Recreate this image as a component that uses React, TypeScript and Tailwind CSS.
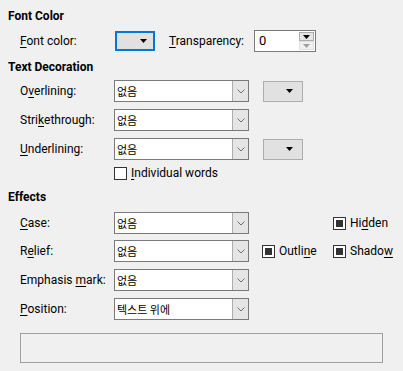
import React from "react";

const U = ({ children }: { children: React.ReactNode }) => (
  <span className="underline underline-offset-[2px] decoration-[1px]">{children}</span>
);

function Chevron() {
  return (
    <svg width="8" height="5" viewBox="0 0 8 5">
      <path d="M0.5 0.5 L4 4 L7.5 0.5" fill="none" stroke="#6d6d6d" strokeWidth="1" />
    </svg>
  );
}

function Tri({ color = "#000" }: { color?: string }) {
  return (
    <svg width="7" height="4" viewBox="0 0 7 4">
      <path d="M0 0 L7 0 L3.5 4 Z" fill={color} />
    </svg>
  );
}

function ListBox({ value }: { value: string }) {
  return (
    <div className="flex h-[22px] w-[135px] border border-[#7a7a7a] bg-white">
      <div className="flex-1 pl-[2px] text-[11px] leading-[20px] font-['Noto_Sans_CJK_KR',sans-serif] text-black">
        {value}
      </div>
      <div className="flex w-[16px] items-center justify-center border-l border-[#adadad] bg-[#e5e5e5]">
        <Chevron />
      </div>
    </div>
  );
}

function ColorBtn({ focused }: { focused?: boolean }) {
  return (
    <div
      className={
        focused
          ? "flex h-[20px] w-[40px] items-center justify-end border-2 border-[#0078d7] bg-[#e1e1e1] pr-[6px]"
          : "flex h-[21px] w-[40px] items-center justify-end border border-[#adadad] bg-[#e1e1e1] pr-[9px]"
      }
    >
      <Tri />
    </div>
  );
}

function Check({ checked, children }: { checked?: boolean; children: React.ReactNode }) {
  return (
    <div className="flex items-center gap-[4px]">
      <div className="flex h-[13px] w-[13px] items-center justify-center border border-[#333] bg-white">
        {checked && <div className="h-[7px] w-[7px] bg-[#333]" />}
      </div>
      <span>{children}</span>
    </div>
  );
}

function Row({ label, children, mt }: { label: React.ReactNode; children: React.ReactNode; mt: string }) {
  return (
    <div className={`flex h-[22px] items-center ${mt}`}>
      <div className="w-[94px] pl-[12px] box-content">{label}</div>
      {children}
    </div>
  );
}

export default function App() {
  return (
    <div className="h-[371px] w-[403px] overflow-hidden bg-[#f0f0f0] pl-[8px] pt-[8px] text-[12px] leading-[16px] text-black font-['Roboto',sans-serif]">
      <div className="h-[16px] font-bold">Font Color</div>
      <div className="mt-[6px] flex h-[22px] items-center">
        <div className="w-[94px] pl-[12px] box-content">
          <U>F</U>ont color:
        </div>
        <div className="ml-[1px]">
          <ColorBtn focused />
        </div>
        <div className="ml-[14px] w-[85px]">
          <U>T</U>ransparency:
        </div>
        <div className="flex h-[22px] w-[62px] items-center border border-[#7a7a7a] bg-white">
          <div className="flex-1 pl-[4px] text-[13px]">0</div>
          <div className="mr-[1px] flex flex-col">
            <div className="flex h-[9px] w-[15px] items-center justify-center border border-[#adadad] bg-[#e5e5e5]">
              <Tri />
            </div>
            <div className="flex h-[9px] w-[15px] items-center justify-center border border-[#e0e0e0] bg-[#f0f0f0]">
              <Tri color="#a0a0a0" />
            </div>
          </div>
        </div>
      </div>

      <div className="mt-[7px] h-[16px] font-bold">Text Decoration</div>
      <Row mt="mt-[5px]" label={<>O<U>v</U>erlining:</>}>
        <ListBox value="없음" />
        <div className="ml-[14px]">
          <ColorBtn />
        </div>
      </Row>
      <Row mt="mt-[7px]" label={<>Stri<U>k</U>ethrough:</>}>
        <ListBox value="없음" />
      </Row>
      <Row mt="mt-[7px]" label={<><U>U</U>nderlining:</>}>
        <ListBox value="없음" />
        <div className="ml-[14px]">
          <ColorBtn />
        </div>
      </Row>
      <div className="mt-[6px] flex h-[14px] items-center pl-[106px]">
        <Check>
          <U>I</U>ndividual words
        </Check>
      </div>

      <div className="mt-[9px] h-[16px] font-bold">Effects</div>
      <Row mt="mt-[7px]" label={<><U>C</U>ase:</>}>
        <ListBox value="없음" />
        <div className="ml-[13px] w-[71px]" />
        <Check checked>
          Hi<U>d</U>den
        </Check>
      </Row>
      <Row mt="mt-[6px]" label={<>R<U>e</U>lief:</>}>
        <ListBox value="없음" />
        <div className="ml-[13px] w-[71px]">
          <Check checked>
            Outli<U>n</U>e
          </Check>
        </div>
        <Check checked>
          Shado<U>w</U>
        </Check>
      </Row>
      <Row mt="mt-[7px]" label={<>Emphasis <U>m</U>ark:</>}>
        <ListBox value="없음" />
      </Row>
      <Row mt="mt-[7px]" label={<><U>P</U>osition:</>}>
        <ListBox value="텍스트 위에" />
      </Row>

      <div className="ml-[12px] mt-[13px] h-[30px] w-[363px] border border-[#a0a0a0]" />
    </div>
  );
}
